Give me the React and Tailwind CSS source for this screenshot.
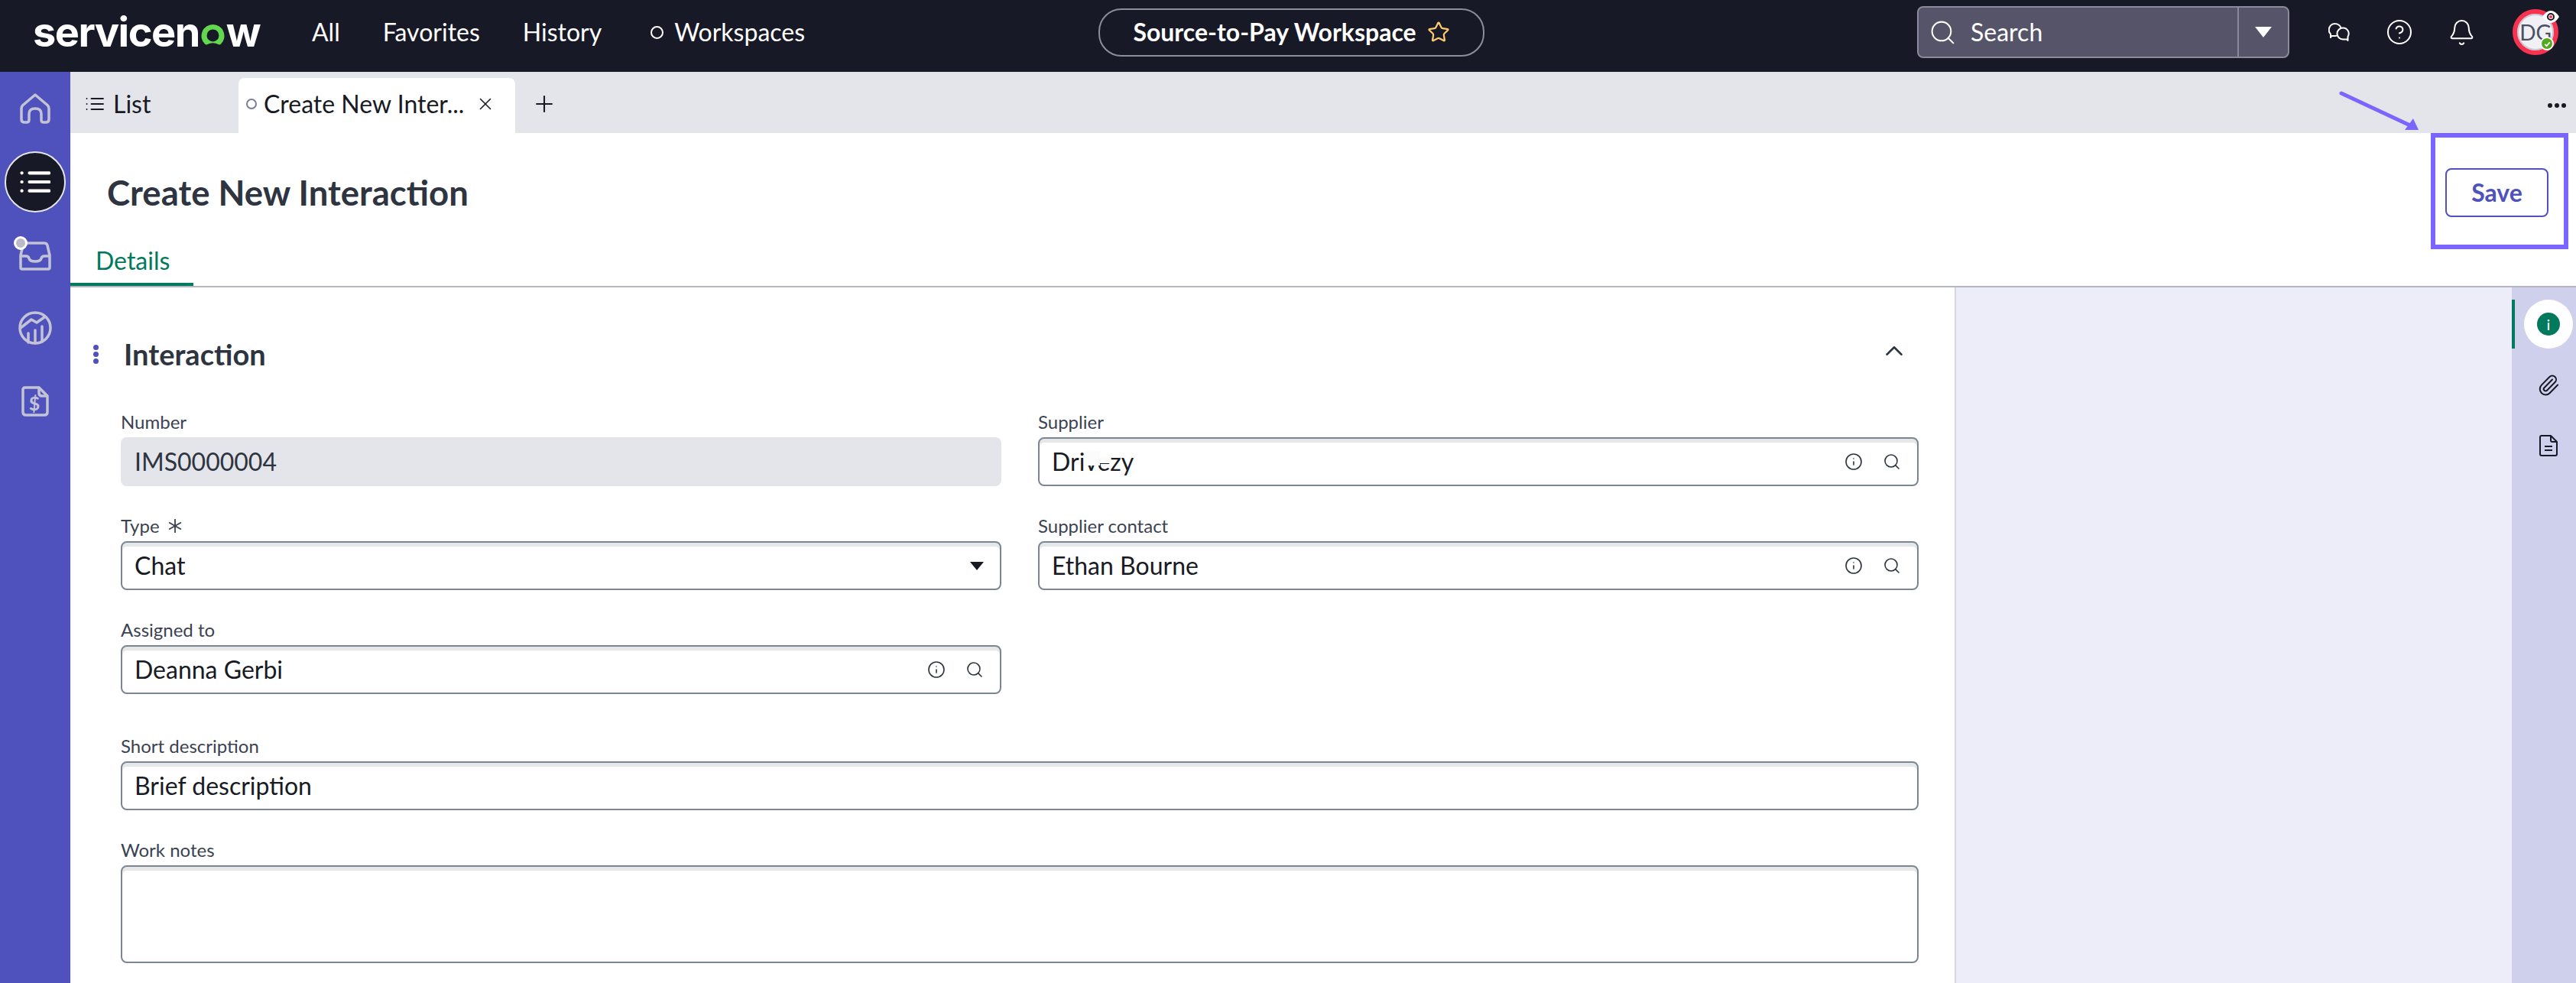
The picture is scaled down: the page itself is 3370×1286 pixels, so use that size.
import { Search, Info, X, Plus, Paperclip, ChevronUp, Bell, CircleHelp, Star } from "lucide-react";

// Top navigation links
const NavLink = ({ children }) => {
  return <span className="text-[32px] leading-none text-white">{children}</span>;
};

// Logo mark for the "o"
const LogoO = () => {
  return (
    <svg viewBox="0 0 34 32" className="h-[30px] w-[33px] shrink-0 self-end mb-[1px] mx-[1px]">
      <path
        d="M17 1a16 16 0 0 0-11 27.6c1 .9 2.4 1 3.6.3A14 14 0 0 1 17 27a14 14 0 0 1 7.4 1.9c1.200.7 2.600.6 3.600-.3A16 16 0 0 0 17 1zm0 7a8.500 8.500 0 1 1 0 17 8.500 8.500 0 0 1 0-17z"
        fill="#62d84e"
        fillRule="evenodd"
      />
    </svg>
  );
};

const ChatIcon = () => {
  return (
    <svg viewBox="0 0 28 24" className="w-[28px] h-[24px]" fill="none" stroke="#fff" strokeWidth="2" strokeLinejoin="round">
      <path d="M9 1a8 8 0 0 1 8 8 8 8 0 0 1-8 8H4l-1 2v-4.500A8 8 0 0 1 9 1z" />
      <path d="M19 6.500a7.500 7.500 0 1 0 0 15h5.500l1 1.500v-5A7.500 7.500 0 0 0 19 6.500z" fill="#181926" />
    </svg>
  );
};

const ListIcon = ({ color, size, width }) => {
  return (
    <svg viewBox="0 0 24 24" style={{ width: size, height: size }} fill="none" stroke={color} strokeWidth={width} strokeLinecap="round">
      <path d="M7.500 5H23M7.500 12H23M7.500 19H23" />
      <path d="M1.500 5h.1M1.500 12h.1M1.500 19h.1" />
    </svg>
  );
};

// Left sidebar icons
const HomeIcon = () => {
  return (
    <svg viewBox="0 0 40 40" className="w-10 h-10" fill="none" stroke="#c2c4d6" strokeWidth="3.500" strokeLinejoin="round">
      <path d="M20 2 36 15.500Q38 17.500 38 20V34Q38 38 34 38H31Q28 38 28 35V27Q28 20 20 20 12 20 12 27V35Q12 38 9 38H6Q2 38 2 34V20Q2 17.500 4 15.500Z" />
    </svg>
  );
};

const InboxIcon = () => {
  return (
    <svg viewBox="0 0 42 38" className="w-[42px] h-[38px]" fill="none" stroke="#c2c4d6" strokeWidth="3.500" strokeLinejoin="round">
      <path d="M7 2H33Q36 2 37 5L40 18V34Q40 36 38 36H4Q2 36 2 34V18L5 5Q5.500 2 7 2Z" />
      <path d="M2 19H9Q12 19 13 22 14 26 21 26 28 26 29 22 30 19 33 19H40" />
    </svg>
  );
};

const AnalyticsIcon = () => {
  return (
    <svg viewBox="0 0 44 44" className="w-11 h-11" fill="none" stroke="#c2c4d6" strokeWidth="3.500" strokeLinecap="round" strokeLinejoin="round">
      <circle cx="22" cy="22" r="20" />
      <path d="M3 22 17 11l7 4 10-7" />
      <path d="M13 29v12M22 25v17M31 20v20" />
    </svg>
  );
};

const DollarDocIcon = () => {
  return (
    <svg viewBox="0 0 36 40" className="w-9 h-10" fill="none" stroke="#c2c4d6" strokeWidth="3.500" strokeLinejoin="round">
      <path d="M5 2H23L34 13V34Q34 38 30 38H6Q2 38 2 34V5Q2 2 5 2Z" />
      <path d="M23 2V9Q23 13 27 13H34" />
      <text x="17" y="32" textAnchor="middle" fontSize="25" fontWeight="700" fill="#c2c4d6" stroke="none" fontFamily="Lato, sans-serif">$</text>
    </svg>
  );
};

const DocIcon = () => {
  return (
    <svg viewBox="0 0 24 28" className="w-6 h-7" fill="none" stroke="#181926" strokeWidth="2" strokeLinejoin="round">
      <path d="M3 1H15L23 9V25Q23 27 21 27H3Q1 27 1 25V3Q1 1 3 1Z" />
      <path d="M15 1V7Q15 9 17 9H23" />
      <path d="M7 15H17M7 20H17" />
    </svg>
  );
};

// Reference field with info and search icons
const FieldIcons = () => {
  return (
    <div className="flex items-center gap-[26px] shrink-0 text-[#2e3440] pr-[3px]">
      <Info size={24} strokeWidth={1.600} />
      <Search size={24} strokeWidth={1.600} />
    </div>
  );
};

const Field = ({ label, value, required, icons, select, readOnly, patch }) => {
  return (
    <div className="flex flex-col">
      <div className="flex items-center h-[31px] pb-[9px] text-[24px] leading-none text-[#3b4252]">
        {label}
        {required && (
          <svg viewBox="0 0 18 18" className="ml-[11px] w-[18px] h-[18px]" fill="none" stroke="#3b4252" strokeWidth="1.800">
            <path d="M9 0V18M1 4.500 17 13.500M17 4.500 1 13.500" />
          </svg>
        )}
      </div>
      <div
        className={
          readOnly
            ? "flex items-center h-[64px] rounded-[8px] bg-[#e4e5ea] px-[18px] text-[32px] text-[#2e3440]"
            : "relative flex items-center justify-between h-[64px] rounded-[8px] border-2 border-[#7b8593] bg-white pl-[16px] pr-[18px] text-[32px] text-[#181a24] shadow-[inset_0_5px_0_0_#e6e8e8]"
        }
      >
        <span>{value}</span>
        {patch && <div className="absolute left-[58px] top-[16px] w-[21px] h-[19px] bg-[#fbfbfb]" />}
        {patch && <div className="absolute left-[79px] top-[24px] w-[14px] h-[8px] bg-[#fbfbfb]" />}
        {icons && <FieldIcons />}
        {select && <div className="w-0 h-0 mr-[3px] border-x-[9px] border-x-transparent border-t-[11px] border-t-[#181a24]" />}
      </div>
    </div>
  );
};

const App = () => {
  return (
    <div className="relative w-[3370px] h-[1286px] overflow-hidden flex flex-col bg-white font-[family-name:Lato,sans-serif]">
      {/* Header */}
      <header className="h-[94px] shrink-0 bg-[#181926] flex items-center pb-[10px]">
        <div className="flex items-end ml-[43px] w-[299px] h-[44px] -mt-[4px] text-white font-bold text-[54px] leading-[44px] tracking-[-1.500px] font-[family-name:Inter,sans-serif]">
          <span className="leading-[40px]">servicen</span>
          <LogoO />
          <span className="leading-[40px]">w</span>
        </div>
        <div className="flex items-center ml-[66px] gap-[56px]">
          <NavLink>All</NavLink>
          <NavLink>Favorites</NavLink>
          <NavLink>History</NavLink>
          <div className="flex items-center gap-[14px] ml-[8px]">
            <div className="w-[17px] h-[17px] rounded-full border-2 border-white" />
            <NavLink>Workspaces</NavLink>
          </div>
        </div>
        <div className="ml-[384px] w-[505px] h-[63px] rounded-[30px] border-2 border-[#8d8e9b] flex items-center justify-center gap-[14px]">
          <span className="text-[32px] leading-none font-bold text-white">Source-to-Pay Workspace</span>
          <Star size={30} strokeWidth={1.800} color="#fdcb6e" />
        </div>
        <div className="ml-[566px] w-[487px] h-[68px] flex rounded-[8px] border-2 border-[#8a8a98] bg-[#565469]">
          <div className="flex-1 flex items-center pl-[13px] gap-[18px] border-r-2 border-r-[#8a8a98]">
            <Search size={37} strokeWidth={1.300} color="#fff" />
            <span className="text-[32px] leading-none text-white">Search</span>
          </div>
          <div className="w-[64px] flex items-center justify-center">
            <div className="w-0 h-0 border-x-[11px] border-x-transparent border-t-[14px] border-t-white" />
          </div>
        </div>
        <div className="ml-[51px]">
          <ChatIcon />
        </div>
        <div className="ml-[47px]">
          <CircleHelp size={36} strokeWidth={1.350} color="#fff" />
        </div>
        <div className="ml-[45px]">
          <Bell size={37} strokeWidth={1.300} color="#fff" />
        </div>
        <div className="relative ml-[48px] w-[60px] h-[60px] rounded-full bg-[#f0f0f5] border-[6px] border-[#f8334f] shadow-[inset_0_0_0_2px_#c9cad6] flex items-center justify-center text-[28px] text-[#4a5163]">
          DG
          <div className="absolute left-[30px] top-[30px] w-[18px] h-[18px] rounded-full bg-[#53a81f] border-2 border-white flex items-center justify-center">
            <svg viewBox="0 0 10 10" className="w-[9px] h-[9px]" fill="none" stroke="#fff" strokeWidth="2">
              <path d="M1.500 5.500 4 8l4.500-5.500" />
            </svg>
          </div>
          <svg viewBox="0 0 22 16" className="absolute left-[33px] -top-[4px] w-[22px] h-[16px]">
            <path d="M0 8Q5 0 11 0 17 0 22 8 17 16 11 16 5 16 0 8Z" fill="#fff" />
            <circle cx="11" cy="8" r="4" fill="#fff" stroke="#181926" strokeWidth="2" />
            <circle cx="11" cy="8" r="2" fill="#f8334f" />
          </svg>
        </div>
      </header>

      <div className="flex flex-1 min-h-0">
        {/* Left sidebar */}
        <aside className="w-[92px] shrink-0 bg-[#4f52bd] flex flex-col items-center pt-[28px]">
          <HomeIcon />
          <div className="mt-[36px] w-[80px] h-[80px] rounded-full bg-[#181926] border-2 border-[#e4e5ea] flex items-center justify-center">
            <ListIcon color="#fff" size={40} width={2.500} />
          </div>
          <div className="relative mt-[38px]">
            <InboxIcon />
            <div className="absolute -left-[7px] -top-[7px] w-[18px] h-[18px] rounded-full bg-[#b9bbcb] border-[3px] border-white" />
          </div>
          <div className="mt-[53px]">
            <AnalyticsIcon />
          </div>
          <div className="mt-[54px]">
            <DollarDocIcon />
          </div>
        </aside>

        <main className="flex-1 min-w-0 flex flex-col">
          {/* Tab bar */}
          <div className="h-[80px] shrink-0 bg-[#e4e5ea] flex items-end">
            <div className="w-[220px] h-[72px] flex items-center pl-[20px] pb-[4px] gap-[12px] text-[32px] leading-none text-[#181a24]">
              <ListIcon color="#181a24" size={24} width={1.800} />
              List
            </div>
            <div className="w-[362px] h-[72px] bg-white rounded-t-[8px] flex items-center pl-[10px] pb-[4px] text-[32px] leading-none text-[#181a24]">
              <div className="w-[14px] h-[14px] rounded-full border-2 border-[#7b7d92] shrink-0" />
              <span className="ml-[9px] w-[263px] whitespace-nowrap">Create New Inter...</span>
              <X size={26} strokeWidth={1.500} className="ml-[14px]" />
            </div>
            <div className="h-[72px] flex items-center ml-[21px] pb-[4px]">
              <Plus size={34} strokeWidth={1.500} color="#181a24" />
            </div>
            <div className="ml-auto mr-[13px] h-[72px] flex items-center gap-[3px]">
              <div className="w-[6px] h-[6px] rounded-full bg-[#181a24]" />
              <div className="w-[6px] h-[6px] rounded-full bg-[#181a24]" />
              <div className="w-[6px] h-[6px] rounded-full bg-[#181a24]" />
            </div>
          </div>

          {/* Title area */}
          <div className="h-[202px] shrink-0 flex flex-col border-b-2 border-[#b4b5c4]">
            <div className="h-[156px] flex items-center justify-between pl-[48px] pr-[36px]">
              <h1 className="text-[45.500px] leading-none font-bold text-[#2e3440] -mt-[1px]">Create New Interaction</h1>
              <button className="w-[135px] h-[64px] rounded-[8px] border-2 border-[#4f52bd] text-[32px] font-bold text-[#4f52bd]">Save</button>
            </div>
            <div className="w-[161px] h-[44px] pl-[33px] border-b-[4px] border-[#00795c] -mb-[2px] text-[32px] leading-[22px] text-[#00795c]">
              Details
            </div>
          </div>

          <div className="flex-1 min-h-0 flex">
            {/* Form */}
            <div className="w-[2467px] shrink-0 border-r-2 border-[#d5d6e0] pl-[66px] pr-[47px] pt-[66px]">
              <div className="flex items-center h-[42px] mb-[57px] -ml-[36px]">
                <div className="w-[8px] flex flex-col gap-[2px]">
                  <div className="w-[7px] h-[7px] rounded-full bg-[#4f52bd]" />
                  <div className="w-[7px] h-[7px] rounded-full bg-[#4f52bd]" />
                  <div className="w-[7px] h-[7px] rounded-full bg-[#4f52bd]" />
                </div>
                <h2 className="ml-[32px] text-[38px] leading-none font-bold text-[#2e3440]">Interaction</h2>
                <ChevronUp size={38} strokeWidth={1.600} color="#2e3440" className="ml-auto mr-[13px] -mt-[8px]" />
              </div>
              <div className="grid grid-cols-2 gap-x-[48px] gap-y-[41px]">
                <Field label="Number" value="IMS0000004" readOnly />
                <Field label="Supplier" value="Drivezy" icons patch />
                <Field label="Type" value="Chat" required select />
                <Field label="Supplier contact" value="Ethan Bourne" icons />
                <Field label="Assigned to" value="Deanna Gerbi" icons />
              </div>
              <div className="mt-[57px] flex flex-col gap-[41px]">
                <Field label="Short description" value="Brief description" />
                <div className="flex flex-col">
                  <div className="flex items-center h-[31px] pb-[9px] text-[24px] leading-none text-[#3b4252]">Work notes</div>
                  <div className="h-[128px] rounded-[8px] border-2 border-[#7b8593] bg-white shadow-[inset_0_5px_0_0_#e6e8e8]" />
                </div>
              </div>
            </div>

            {/* Side panel */}
            <div className="flex-1 bg-[#ecedf8]" />

            {/* Right rail */}
            <div className="w-[84px] shrink-0 bg-[#cfd0ec] flex flex-col pt-[16px]">
              <div className="flex h-[64px]">
                <div className="w-[4px] h-full bg-[#00795c]" />
                <div className="ml-[12px] w-[64px] h-[64px] rounded-full bg-white flex items-center justify-center">
                  <div className="w-[30px] h-[30px] rounded-full bg-[#00795c] flex items-center justify-center text-[20px] leading-none text-white">i</div>
                </div>
              </div>
              <div className="mt-[33px] flex justify-center pl-[12px]">
                <Paperclip size={30} strokeWidth={1.600} color="#181926" />
              </div>
              <div className="mt-[50px] flex justify-center pl-[12px]">
                <DocIcon />
              </div>
            </div>
          </div>
        </main>
      </div>

      {/* Annotation over the Save button */}
      <div className="absolute left-[3180px] top-[174px] w-[180px] h-[152px] border-[6px] border-[#7a66ff]" />
      <svg viewBox="0 0 110 56" className="absolute left-[3060px] top-[118px] w-[110px] h-[56px]">
        <path d="M3 4 95 47" stroke="#7a66ff" strokeWidth="5" strokeLinecap="round" />
        <path d="M104 52 86 52 97 37Z" fill="#7a66ff" />
      </svg>
    </div>
  );
};

export default App;
